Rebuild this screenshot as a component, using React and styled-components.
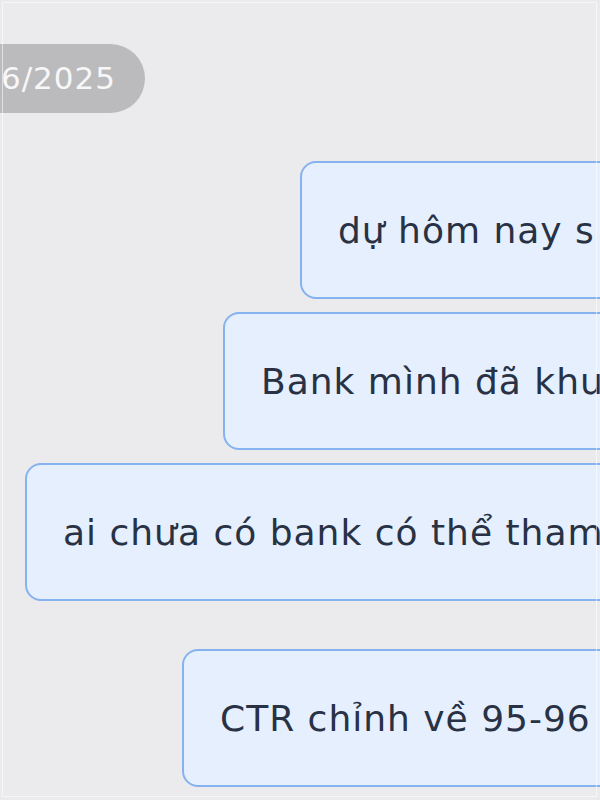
import React from "react";
import styled, { createGlobalStyle } from "styled-components";

const messages = [
    [
        { id: 1, offset: 300, text: "dự hôm nay s" },
        { id: 2, offset: 223, text: "Bank mình đã khu" },
        { id: 3, offset: 25, text: "ai chưa có bank có thể tham" },
    ],
    [{ id: 4, offset: 182, text: "CTR chỉnh về 95-96" }],
];

function App() {
    return (
        <>
            <GlobalStyle />
            <Screen>
                <Page>
                    <DateRow>
                        <DatePill>16/06/2025</DatePill>
                    </DateRow>
                    {messages.map((group, i) => (
                        <Group key={i}>
                            {group.map((m) => (
                                <Bubble key={m.id} $offset={m.offset}>
                                    {m.text}
                                </Bubble>
                            ))}
                        </Group>
                    ))}
                </Page>
                <Frame />
            </Screen>
        </>
    );
}

export default App;

const GlobalStyle = createGlobalStyle`
    html, body {
        margin: 0;
        padding: 0;
        background: #ebebed;
        overflow: hidden;
    }
    body {
        font-family: "DejaVu Sans", "Noto Sans", sans-serif;
    }
`;
const Screen = styled.div`
    position: relative;
    width: 600px;
    height: 800px;
    overflow: hidden;
    background: #ebebed;
`;
const Page = styled.div`
    width: 800px;
    padding-top: 44px;
    display: flex;
    flex-direction: column;
    gap: 48px;
`;
const DateRow = styled.div`
    width: 145px;
    display: flex;
    justify-content: flex-end;
`;
const DatePill = styled.div`
    flex-shrink: 0;
    height: 69px;
    line-height: 69px;
    padding: 0 29px 0 30px;
    border-radius: 35px;
    background: #bbbbbd;
    color: #f7f7f8;
    font-size: 31px;
    letter-spacing: 1px;
    white-space: nowrap;
`;
const Group = styled.div`
    display: flex;
    flex-direction: column;
    gap: 13px;
`;
const Bubble = styled.div`
    margin-left: ${(p) => p.$offset}px;
    padding: 43px 36px 41px;
    border: 2px solid #86b2ef;
    border-radius: 16px;
    background: #e5effd;
    color: #283244;
    font-size: 36px;
    letter-spacing: 1px;
    line-height: 50px;
    white-space: nowrap;
`;
const Frame = styled.div`
    position: absolute;
    top: 2px;
    left: 2px;
    right: 3px;
    bottom: 3px;
    border: 1px solid rgba(255, 255, 255, 0.55);
    pointer-events: none;
`;
